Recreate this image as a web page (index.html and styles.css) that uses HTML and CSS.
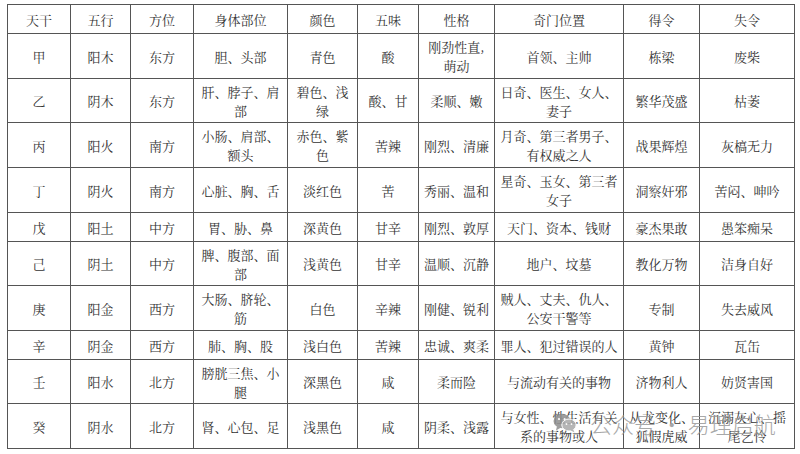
FILE: index.html
```html
<!DOCTYPE html>
<html lang="zh-CN">
<head>
<meta charset="utf-8">
<title>天干</title>
<link rel="stylesheet" href="styles.css">
</head>
<body>
<div class="page">
  <div class="grid">
    <div class="c">天干</div><div class="c">五行</div><div class="c">方位</div><div class="c">身体部位</div><div class="c">颜色</div><div class="c">五味</div><div class="c">性格</div><div class="c">奇门位置</div><div class="c">得令</div><div class="c">失令</div>

    <div class="c">甲</div><div class="c">阳木</div><div class="c">东方</div><div class="c">胆、头部</div><div class="c">青色</div><div class="c">酸</div><div class="c">刚劲性直,<br>萌动</div><div class="c">首领、主帅</div><div class="c">栋梁</div><div class="c">废柴</div>

    <div class="c">乙</div><div class="c">阴木</div><div class="c">东方</div><div class="c">肝、脖子、肩<br>部</div><div class="c">碧色、浅<br>绿</div><div class="c">酸、甘</div><div class="c">柔顺、嫩</div><div class="c">日奇、医生、女人、<br>妻子</div><div class="c">繁华茂盛</div><div class="c">枯萎</div>

    <div class="c">丙</div><div class="c">阳火</div><div class="c">南方</div><div class="c">小肠、肩部、<br>额头</div><div class="c">赤色、紫<br>色</div><div class="c">苦辣</div><div class="c">刚烈、清廉</div><div class="c">月奇、第三者男子、<br>有权威之人</div><div class="c">战果辉煌</div><div class="c">灰槁无力</div>

    <div class="c">丁</div><div class="c">阴火</div><div class="c">南方</div><div class="c">心脏、胸、舌</div><div class="c">淡红色</div><div class="c">苦</div><div class="c">秀丽、温和</div><div class="c">星奇、玉女、第三者<br>女子</div><div class="c">洞察奸邪</div><div class="c">苦闷、呻吟</div>

    <div class="c">戊</div><div class="c">阳土</div><div class="c">中方</div><div class="c">胃、胁、鼻</div><div class="c">深黄色</div><div class="c">甘辛</div><div class="c">刚烈、敦厚</div><div class="c">天门、资本、钱财</div><div class="c">豪杰果敢</div><div class="c">愚笨痴呆</div>

    <div class="c">己</div><div class="c">阴土</div><div class="c">中方</div><div class="c">脾、腹部、面<br>部</div><div class="c">浅黄色</div><div class="c">甘辛</div><div class="c">温顺、沉静</div><div class="c">地户、坟墓</div><div class="c">教化万物</div><div class="c">洁身自好</div>

    <div class="c">庚</div><div class="c">阳金</div><div class="c">西方</div><div class="c">大肠、脐轮、<br>筋</div><div class="c">白色</div><div class="c">辛辣</div><div class="c">刚健、锐利</div><div class="c">贼人、丈夫、仇人、<br>公安干警等</div><div class="c">专制</div><div class="c">失去威风</div>

    <div class="c">辛</div><div class="c">阴金</div><div class="c">西方</div><div class="c">肺、胸、股</div><div class="c">浅白色</div><div class="c">苦辣</div><div class="c">忠诚、爽柔</div><div class="c">罪人、犯过错误的人</div><div class="c">黄钟</div><div class="c">瓦缶</div>

    <div class="c">壬</div><div class="c">阳水</div><div class="c">北方</div><div class="c">膀胱三焦、小<br>腿</div><div class="c">深黑色</div><div class="c">咸</div><div class="c">柔而险</div><div class="c">与流动有关的事物</div><div class="c">济物利人</div><div class="c">妨贤害国</div>

    <div class="c">癸</div><div class="c">阴水</div><div class="c">北方</div><div class="c">肾、心包、足</div><div class="c">浅黑色</div><div class="c">咸</div><div class="c">阴柔、浅露</div><div class="c">与女性、性生活有关<br>系的事物或人</div><div class="c">从龙变化、<br>狐假虎威</div><div class="c">沉溺灰心、摇<br>尾乞怜</div>
  </div>

  <div class="watermark">
    <svg class="wm-icon" width="24" height="20" viewBox="0 0 24 20">
      <ellipse cx="9" cy="8" rx="8.5" ry="7.2" fill="#8e8e8e"/>
      <path d="M4 13 L3 17.5 L8 14.5 Z" fill="#8e8e8e"/>
      <ellipse cx="16" cy="12" rx="7.2" ry="6" fill="#aaaaaa" stroke="#fff" stroke-width="1"/>
      <path d="M20 16 L21.5 19.5 L17 17 Z" fill="#aaaaaa"/>
      <circle cx="6" cy="6" r="1.1" fill="#fff"/>
      <circle cx="11.5" cy="6" r="1.1" fill="#fff"/>
      <circle cx="13.5" cy="11" r="0.9" fill="#fff"/>
      <circle cx="18.5" cy="11" r="0.9" fill="#fff"/>
    </svg>
    <span class="wm-text">公众号 · 易理启航</span>
  </div>
</div>
</body>
</html>
```

FILE: styles.css
```css
html, body {
  margin: 0;
  padding: 0;
  background: #ffffff;
}

.page {
  position: relative;
  width: 800px;
  height: 454px;
  padding-top: 4px;
  padding-left: 7px;
  box-sizing: border-box;
}

.grid {
  display: grid;
  grid-template-columns: 62px 59px 62px 93px 69px 60px 75px 128px 75px 94px;
  grid-template-rows: 28px 44px 43px 44px 44px 28px 43px 44px 28px 43px 44px;
  gap: 1px;
  padding: 1px;
  background: #555555;
  width: max-content;
}

.c {
  background: #ffffff;
  display: flex;
  align-items: center;
  justify-content: center;
  text-align: center;
  padding: 0 4px;
  font-family: "Noto Serif CJK SC", "Noto Sans CJK SC", serif;
  font-size: 13px;
  line-height: 19px;
  color: #333333;
}

.watermark {
  position: absolute;
  left: 553px;
  top: 410px;
  display: flex;
  align-items: center;
  gap: 13px;
  opacity: 0.85;
}

.wm-icon {
  display: block;
}

.wm-text {
  font-family: "Noto Sans CJK SC", sans-serif;
  font-weight: 300;
  font-size: 22px;
  line-height: 26px;
  color: #9a9a9a;
  white-space: nowrap;
}
```
